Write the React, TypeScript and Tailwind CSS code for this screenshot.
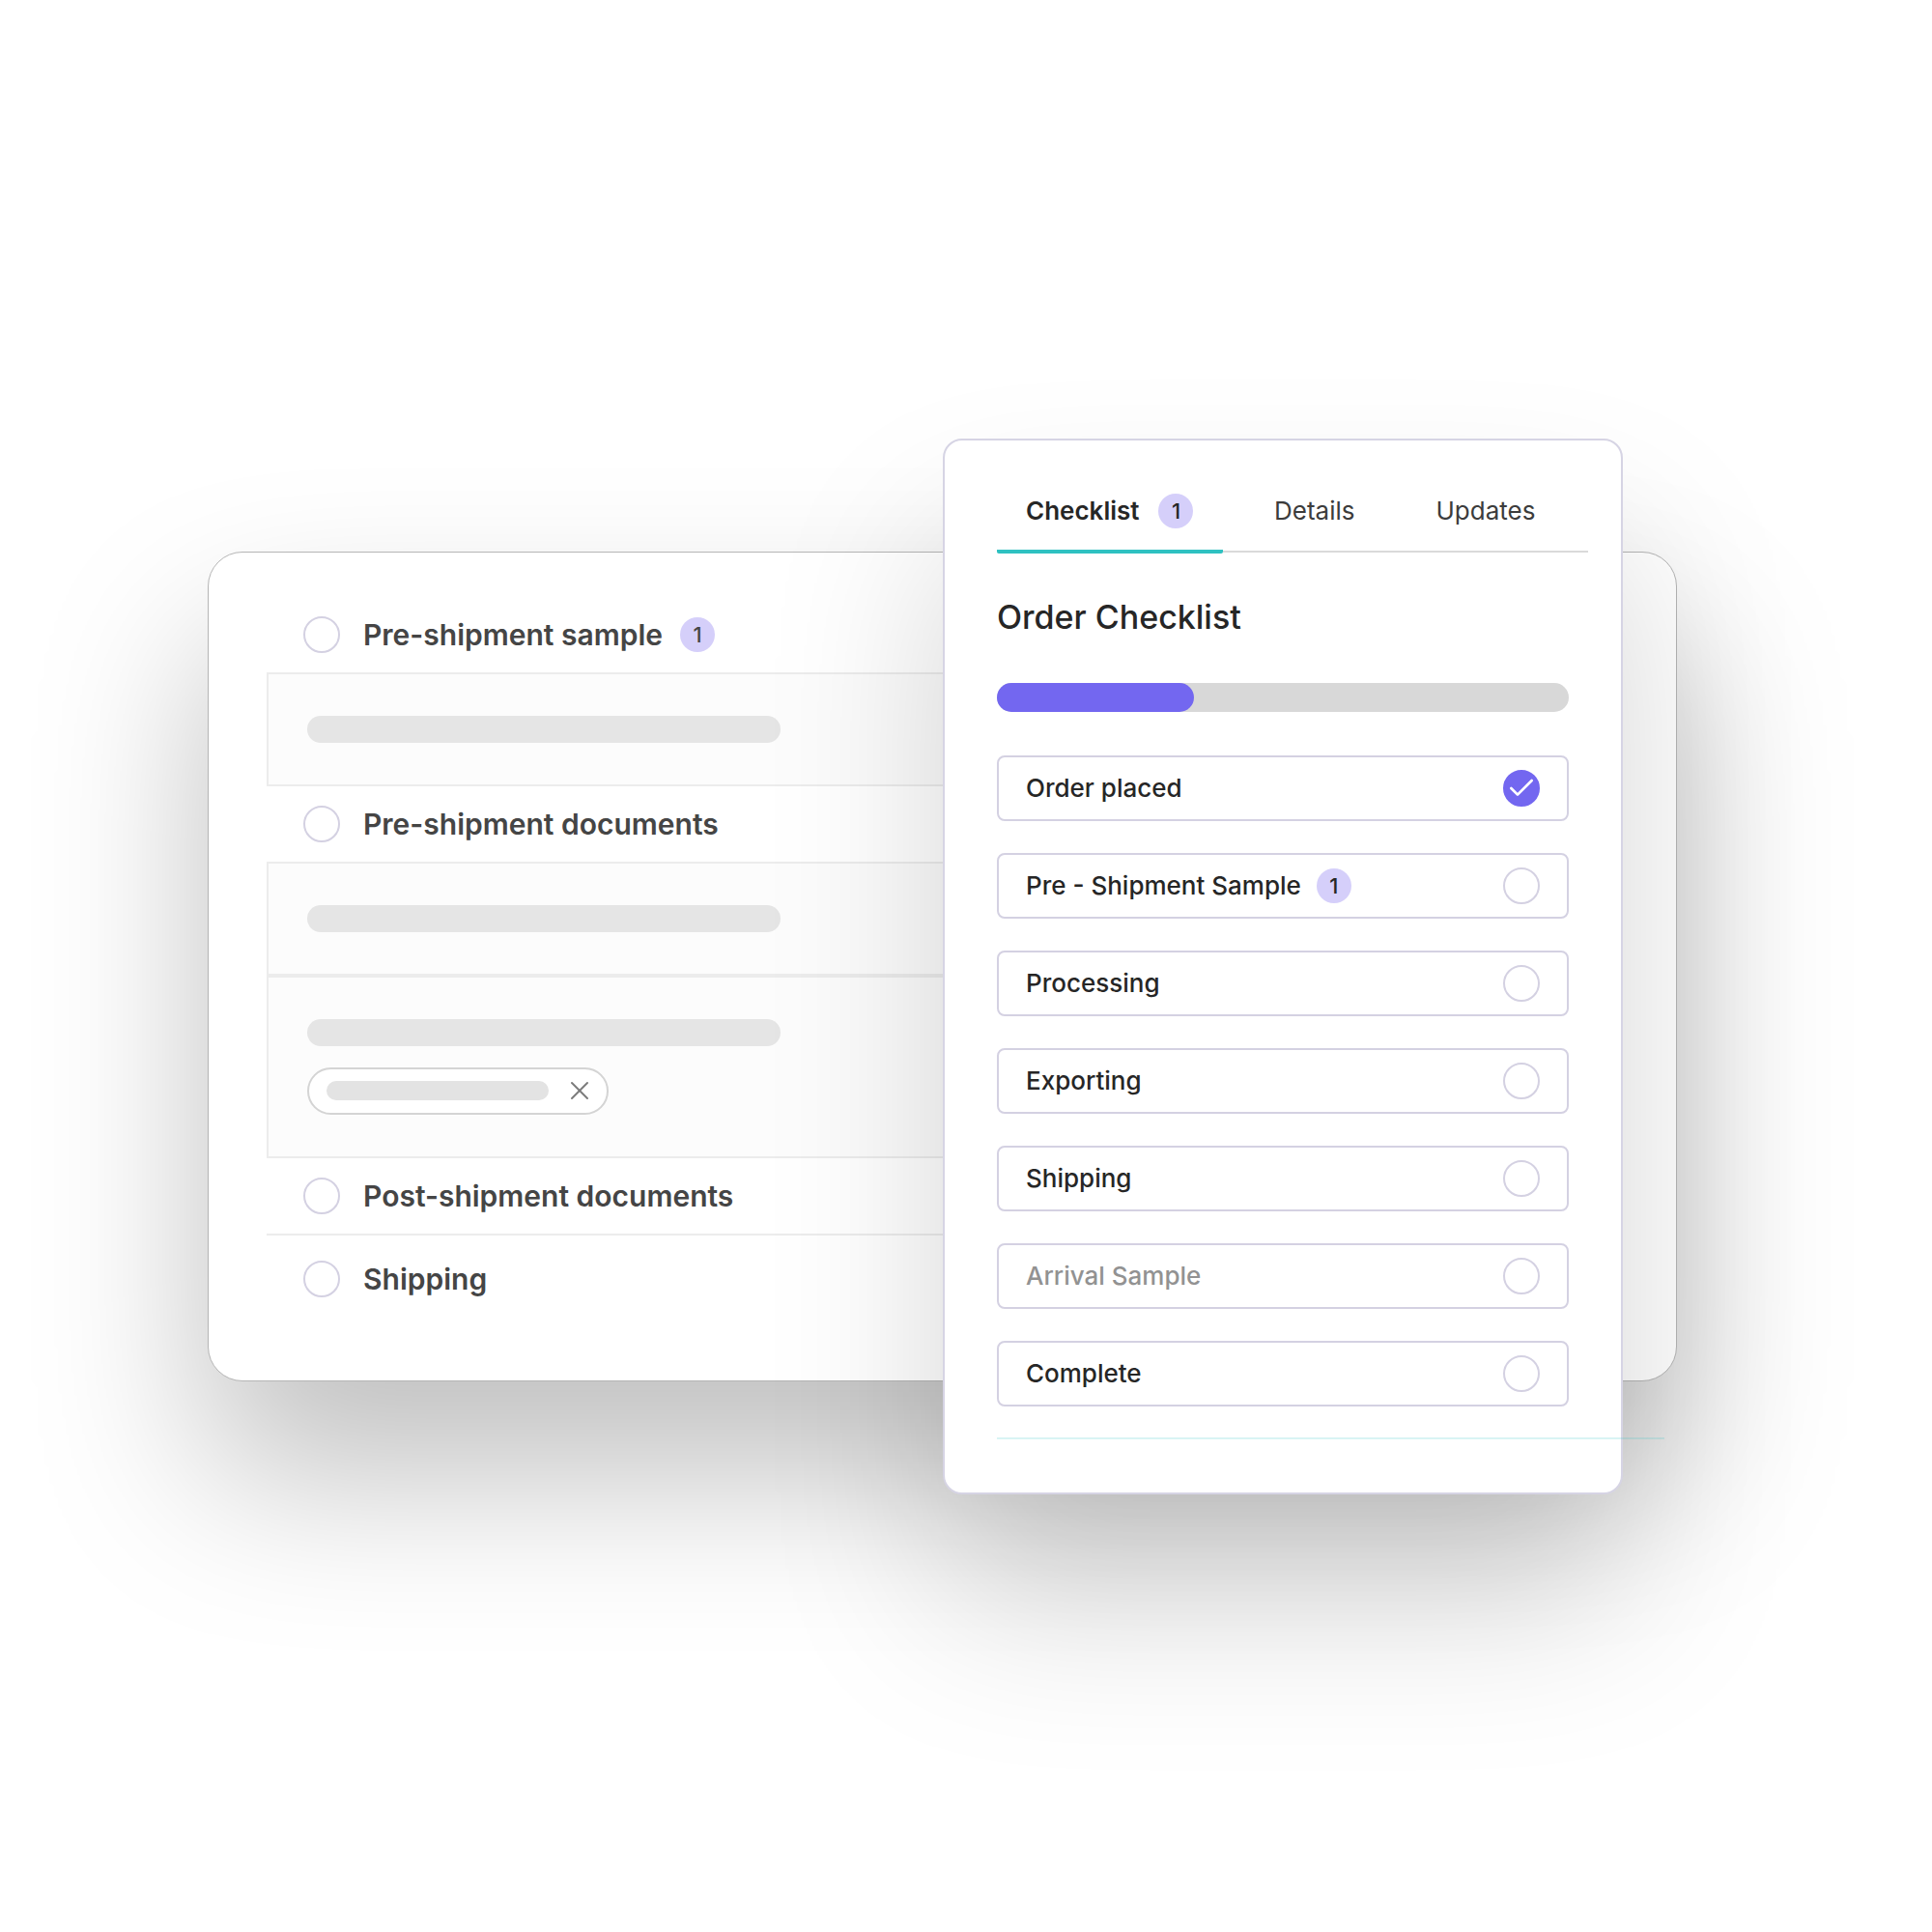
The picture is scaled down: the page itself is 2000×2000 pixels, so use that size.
import { Check, X } from "lucide-react";

const tabs = [
  { label: "Checklist", count: 1, active: true },
  { label: "Details" },
  { label: "Updates" },
];

const steps = [
  { label: "Order placed", done: true },
  { label: "Pre - Shipment Sample", count: 1 },
  { label: "Processing" },
  { label: "Exporting" },
  { label: "Shipping" },
  { label: "Arrival Sample", muted: true },
  { label: "Complete" },
];

const Badge = ({ count }: { count: number }) => (
  <span className="flex size-9 items-center justify-center rounded-full bg-[#d5cffa] text-[22px] leading-none font-medium">
    {count}
  </span>
);

const Circle = ({ checked = false }: { checked?: boolean }) => (
  <span className="relative flex size-[38px] shrink-0">
    <input
      type="checkbox"
      defaultChecked={checked}
      className="peer size-full appearance-none rounded-full border-2 border-[#d4d1e2] bg-white checked:border-[#7367f0] checked:bg-[#7367f0]"
    />
    <Check
      size={32}
      strokeWidth={2}
      className="pointer-events-none absolute inset-0 m-auto hidden text-white peer-checked:block"
    />
  </span>
);

const SectionRow = ({ label, count, className }: { label: string; count?: number; className: string }) => (
  <label className={`flex items-center pl-[38px] text-[30px] leading-9 font-semibold ${className}`}>
    <Circle />
    <span className="mr-[18px] ml-6">{label}</span>
    {count && <Badge count={count} />}
  </label>
);

const Placeholder = () => <div className="h-7 w-[490px] rounded-full bg-[#e5e5e5]" />;

const Documents = () => (
  <section className="col-start-1 row-start-1 rounded-[36px] border border-[#b5b5b5] bg-white pt-[60px] pr-[60px] pl-[60px] text-[#454545] shadow-[0_96px_176px_rgba(0,0,0,0.25)]">
    <SectionRow label="Pre-shipment sample" count={1} className="h-16 pb-[13px]" />
    <div className="border-2 border-[#ececec] bg-[#fcfcfc] py-[43px] pl-10">
      <Placeholder />
    </div>
    <SectionRow label="Pre-shipment documents" className="h-[78px]" />
    <div className="border-2 border-[#ececec] bg-[#fcfcfc] py-[43px] pl-10">
      <Placeholder />
    </div>
    <div className="border-2 border-[#ececec] bg-[#fcfcfc] py-[43px] pl-10">
      <Placeholder />
      <div className="mt-[22px] flex h-[49px] w-[312px] items-center justify-between rounded-full border-2 border-[#d4d4d4] bg-white pr-3 pl-[18px]">
        <div className="h-5 w-[230px] rounded-full bg-[#e3e3e3]" />
        <button type="button" aria-label="Remove" className="text-[#7b7b7b]">
          <X size={32} strokeWidth={1.5} />
        </button>
      </div>
    </div>
    <SectionRow label="Post-shipment documents" className="h-[78px]" />
    <hr className="border-t-2 border-[#ececec]" />
    <SectionRow label="Shipping" className="mt-[26px] mb-[86px]" />
  </section>
);

const OrderChecklist = () => (
  <section className="col-start-1 row-start-1 mr-[56px] w-[704px] justify-self-end rounded-[20px] border-2 border-[#d6d4e4] bg-white pt-[55px] pb-[55px] pl-[54px] text-[#262626] shadow-[0_112px_180px_rgba(0,0,0,0.17)]">
    <nav className="mr-[34px] flex border-b-2 border-[#dadada] text-[26px] leading-9">
      {tabs.map((tab) => (
        <button
          key={tab.label}
          type="button"
          className={
            tab.active
              ? "-mb-[3px] flex h-[62px] w-[234px] gap-5 rounded-b-xs border-b-4 border-[#2fc1c1] pl-[30px] font-semibold"
              : "pr-[31px] pb-[23px] pl-[53px] text-[#3c3c3c]"
          }
        >
          {tab.label}
          {tab.count && <Badge count={tab.count} />}
        </button>
      ))}
    </nav>

    <h2 className="mt-[46px] text-[34px] leading-[42px] font-medium">Order Checklist</h2>

    <div className="mt-[47px] mr-[54px] h-[30px] rounded-full bg-[#d8d8d8]">
      <div className="h-full w-[204px] rounded-full bg-[#7367f0]" />
    </div>

    <ul className="mt-[45px] mr-[54px] space-y-[33px]">
      {steps.map((step) => (
        <li key={step.label}>
          <label className="flex h-[68px] items-center rounded-lg border-2 border-[#d4d1e2] px-7 text-[26px] leading-9 font-medium">
            <span className={step.muted ? "text-[#929292]" : ""}>{step.label}</span>
            {step.count && (
              <span className="ml-4">
                <Badge count={step.count} />
              </span>
            )}
            <span className="ml-auto">
              <Circle checked={step.done} />
            </span>
          </label>
        </li>
      ))}
    </ul>

    <hr className="mt-[32px] -mr-[45px] border-t-2 border-[#2fc1c1]/18" />
  </section>
);

export default function App() {
  return (
    <main className="grid min-h-screen items-center bg-white pr-[264px] pl-[215px] font-[Inter,sans-serif]">
      <Documents />
      <OrderChecklist />
    </main>
  );
}
